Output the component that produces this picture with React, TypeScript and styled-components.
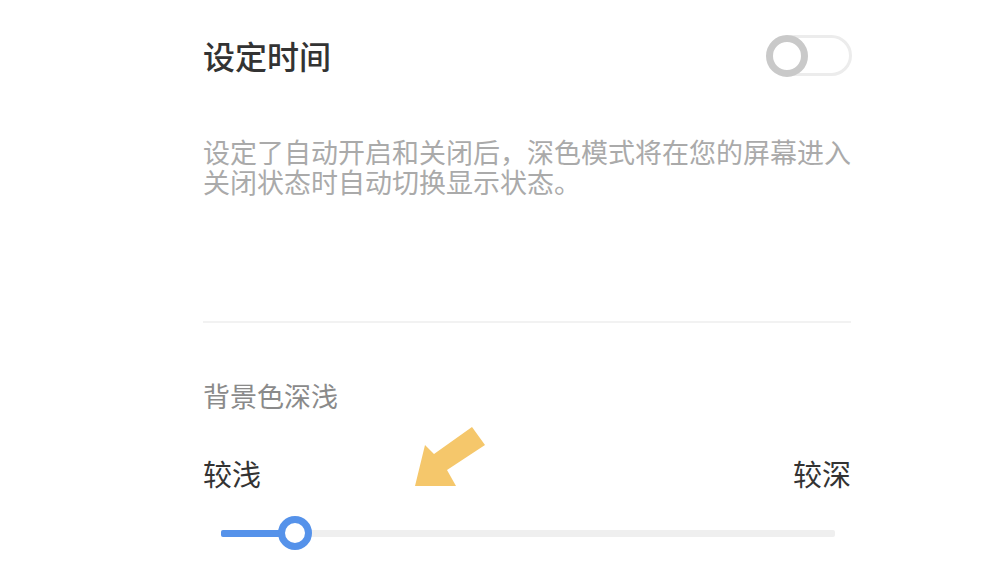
import * as React from 'react'
import styled, { createGlobalStyle } from 'styled-components'

// ___________________________________________________________________

const GlobalStyle = createGlobalStyle`
  html, body {
    margin: 0;
    padding: 0;
    background: #ffffff;
  }
  body {
    font-family: "Noto Sans CJK SC", "Noto Sans", sans-serif;
  }
`

const Page = styled.div`
  position: relative;
  width: 1000px;
  height: 562px;
  overflow: hidden;
  background: #ffffff;
`

const Content = styled.div`
  width: 648px;
  margin-left: 203px;
  padding-top: 35px;
  display: flex;
  flex-direction: column;
`

const HeaderRow = styled.div`
  display: flex;
  align-items: center;
  justify-content: space-between;
  height: 41px;
`

const Title = styled.div`
  font-size: 32px;
  line-height: 41px;
  color: #333333;
  font-weight: 500;
`

const Toggle = styled.div`
  position: relative;
  width: 82px;
  height: 41px;
  box-sizing: border-box;
  border: 3px solid #ececec;
  border-radius: 21px;
  margin-right: -1px;
`

const Knob = styled.div`
  position: absolute;
  left: -7px;
  top: -3px;
  width: 42px;
  height: 42px;
  box-sizing: border-box;
  border: 7px solid #c9c9c9;
  border-radius: 50%;
  background: #ffffff;
`

const Description = styled.p`
  margin: 61px 0 0;
  font-size: 27px;
  line-height: 30px;
  color: #aaaaaa;
  white-space: nowrap;
`

const Divider = styled.div`
  margin-top: 124px;
  height: 2px;
  background: #f2f2f2;
`

const SectionLabel = styled.div`
  margin-top: 55px;
  font-size: 27px;
  line-height: 36px;
  color: #8a8a8a;
`

const RangeLabels = styled.div`
  margin-top: 41px;
  display: flex;
  justify-content: space-between;
  font-size: 29px;
  line-height: 36px;
  color: #333333;
`

const Slider = styled.div`
  margin-top: 25px;
  height: 34px;
  padding: 0 16px 0 18px;
  display: flex;
  align-items: center;
`

const Track = styled.div`
  position: relative;
  flex: 1;
  height: 7px;
  border-radius: 2px;
  background: #efefef;
`

const Fill = styled.div<{ value: number }>`
  position: absolute;
  left: 0;
  top: 0;
  height: 100%;
  width: ${(p) => p.value}%;
  background: #5592ea;
  border-radius: 2px 0 0 2px;
`

const Thumb = styled.div<{ value: number }>`
  position: absolute;
  top: 50%;
  left: ${(p) => p.value}%;
  width: 34px;
  height: 34px;
  box-sizing: border-box;
  border: 7.5px solid #5592ea;
  border-radius: 50%;
  background: #ffffff;
  transform: translate(-50%, -50%);
`

const Arrow = styled.svg`
  position: absolute;
  left: 410px;
  top: 422px;
`

// ___________________________________________________________________

const App: React.FC = () => {
  const value = 12
  return (
    <Page>
      <GlobalStyle />
      <Content>
        <HeaderRow>
          <Title>设定时间</Title>
          <Toggle>
            <Knob />
          </Toggle>
        </HeaderRow>
        <Description>
          设定了自动开启和关闭后，深色模式将在您的屏幕进入
          <br />
          关闭状态时自动切换显示状态。
        </Description>
        <Divider />
        <SectionLabel>背景色深浅</SectionLabel>
        <RangeLabels>
          <span>较浅</span>
          <span>较深</span>
        </RangeLabels>
        <Slider>
          <Track>
            <Fill value={value} />
            <Thumb value={value} />
          </Track>
        </Slider>
      </Content>
      <Arrow width="80" height="70" viewBox="410 422 80 70">
        <polygon
          points="415,486 425,445 434,454 472,427 485,445 447,470 456,486"
          fill="#f5c76b"
        />
      </Arrow>
    </Page>
  )
}

export default App
